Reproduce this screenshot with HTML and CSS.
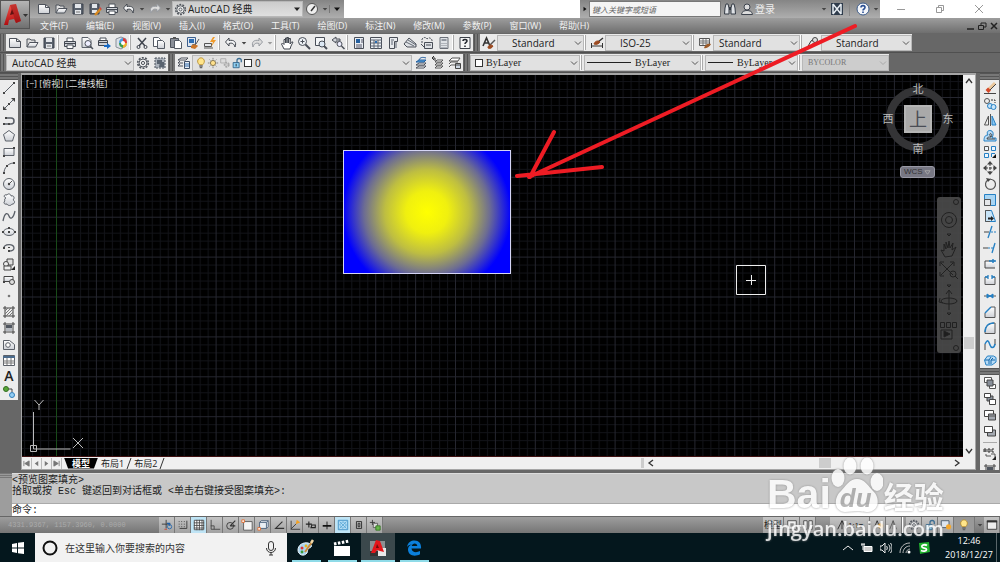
FILE: index.html
```html
<!DOCTYPE html>
<html lang="zh-CN">
<head>
<meta charset="utf-8">
<title>AutoCAD 经典</title>
<link rel="stylesheet" href="styles.css">
</head>
<body>
<svg class="defs" aria-hidden="true">
<defs>
<linearGradient id="paper" x2="0" y2="1"><stop offset="0" stop-color="#fff"/><stop offset="1" stop-color="#cdd0d6"/></linearGradient>
<linearGradient id="red" x2="0" y2="1"><stop offset="0" stop-color="#f4574c"/><stop offset="1" stop-color="#b00d10"/></linearGradient>
</defs>
<symbol id="new" viewBox="0 0 14 14"><path d="M1.500 2.500h7l4 3v6h-11z" fill="url(#paper)" stroke="#4d525b"/><path d="M8.500 2.500v3h4" fill="none" stroke="#4d525b"/></symbol>
<symbol id="open" viewBox="0 0 14 14"><path d="M2 11V3h3l1 1h4v3" fill="#ddd" stroke="#4d525b"/><path d="M2 11l2.500-4.500H13L10.500 11z" fill="url(#paper)" stroke="#4d525b"/></symbol>
<symbol id="save" viewBox="0 0 14 14"><path d="M2 2h10v10H2z" fill="#59616c" stroke="#3d434d"/><path d="M4 2h6v4H4zM4 8h6v4H4z" fill="#e3e6ea"/><path d="M5 10h4" stroke="#777"/></symbol>
<symbol id="saveas" viewBox="0 0 14 14"><path d="M2 2h9v10H2z" fill="#59616c" stroke="#3d434d"/><path d="M4 2h5v4H4zM4 8h5v3H4z" fill="#e3e6ea"/><path d="M7 13l5.500-6" stroke="#d98a20" stroke-width="2.500"/><path d="M12 7l1-1" stroke="#c44" stroke-width="2.500"/></symbol>
<symbol id="print" viewBox="0 0 14 14"><path d="M4 5V2h6v3" fill="#fff" stroke="#4d525b"/><path d="M1.500 5.500h11v5h-11z" fill="#cfd2d7" stroke="#434851"/><path d="M1 7.500h12" stroke="#434851"/><path d="M4 9h6v3.500H4z" fill="#fff" stroke="#4d525b"/></symbol>
<symbol id="preview" viewBox="0 0 14 14"><path d="M2 1.500h6l3 3v7H2z" fill="url(#paper)" stroke="#5d626b"/><circle cx="8" cy="7.500" r="3" fill="#eef" stroke="#4d525b"/><path d="M10 10l3 3" stroke="#4d525b" stroke-width="1.500"/></symbol>
<symbol id="publish" viewBox="0 0 14 14"><path d="M3 4V2h6v2" fill="#fff" stroke="#4d525b"/><path d="M1.500 4.500h9v5h-9z" fill="#cfd2d7" stroke="#434851"/><path d="M1 6.500h10" stroke="#434851"/><path d="M7 9h3V7l4 3-4 3v-2H7z" fill="#1769c4"/></symbol>
<symbol id="dwf" viewBox="0 0 14 14"><path d="M2 3l5-2 5 2v7l-5 3-5-2z" fill="#dce2e8" stroke="#8a9099"/><path d="M9 2a5 5 0 0 1 4 5H9z" fill="#e03a3a"/><path d="M13 7a5 5 0 0 1-4 5V7z" fill="#f1b22c"/><path d="M9 12a5 5 0 0 1-4-5h4z" fill="#3b9b4d"/><path d="M5 7a5 5 0 0 1 4-5v5z" fill="#4d9de0"/><circle cx="9" cy="7" r="2" fill="#fff"/></symbol>
<symbol id="cut" viewBox="0 0 14 14"><path d="M3 2l7 8M11 2L4 10" stroke="#3f444d" stroke-width="1.500"/><circle cx="3.500" cy="11" r="1.500" fill="none" stroke="#3f444d"/><circle cx="10.500" cy="11" r="1.500" fill="none" stroke="#3f444d"/></symbol>
<symbol id="copy" viewBox="0 0 14 14"><path d="M1.500 1.500h5l2 2v7h-7z" fill="#fff" stroke="#555b65"/><path d="M5.500 4.500h5l2 2v6h-7z" fill="url(#paper)" stroke="#555b65"/></symbol>
<symbol id="paste" viewBox="0 0 14 14"><path d="M1.500 2.500h8v9h-8z" fill="#8a8f98" stroke="#4d525b"/><path d="M4 1h3v2H4z" fill="#555"/><path d="M5.500 4.500h5l2 2v6h-7z" fill="#fff" stroke="#555b65"/></symbol>
<symbol id="match" viewBox="0 0 14 14"><path d="M1.500 1.500h8v9h-8z" fill="#dfe6ef" stroke="#3d5f8c"/><path d="M3 3h5v4H3z" fill="#2c6db4"/><path d="M6 9l4-1 3-5" stroke="#555" fill="none"/><path d="M5 10c2-2 5-2 7 0l-3 3-4-1z" fill="#c9752a"/></symbol>
<symbol id="blockedit" viewBox="0 0 14 14"><path d="M1.500 7.500h7v3h-7z" fill="#e6e8eb" stroke="#555"/><path d="M1 12h9" stroke="#555"/><path d="M10 1L7 6h3l-2 5 5-7h-3l2-3z" fill="#f09a28"/></symbol>
<symbol id="undo" viewBox="0 0 14 14"><path d="M5 2L1.500 6 5 10V7.500c3-1 5 0 6 3.500 2-5-1-7.500-6-6.500z" fill="#f4f5f6" stroke="#42474f"/></symbol>
<symbol id="redo" viewBox="0 0 14 14"><path d="M9 2l3.500 4L9 10V7.500c-3-1-5 0-6 3.500-2-5 1-7.500 6-6.500z" fill="#ddd" stroke="#989ca2"/></symbol>
<symbol id="pan" viewBox="0 0 14 14"><path d="M4 13L1.500 8l1-1L4 8.500V3.500h1.500V7 2H7v5V1.500h1.500V7l.5-4.500h1.500L10 8l1.500-2H13l-2 4-1 3z" fill="#fff" stroke="#41464f"/></symbol>
<symbol id="zoom" viewBox="0 0 14 14"><circle cx="5.500" cy="5.500" r="4" fill="#eef2f6" stroke="#4a4f58"/><path d="M3.500 5.500h4M5.500 3.500v4" stroke="#4a4f58"/><path d="M8.500 8.500L13 13" stroke="#4a4f58" stroke-width="2"/></symbol>
<symbol id="zoomwin" viewBox="0 0 14 14"><path d="M1.500 1.500h9v8h-9z" fill="#f4f6f8" stroke="#4a4f58"/><circle cx="8" cy="8" r="3" fill="#dde9f5" stroke="#4a4f58"/><path d="M10 10l3 3" stroke="#4a4f58" stroke-width="2"/></symbol>
<symbol id="zoomprev" viewBox="0 0 14 14"><path d="M5 1L1 4l4 3V5h4V3H5z" fill="#d4d7dc" stroke="#4a4f58"/><circle cx="8.500" cy="8" r="2.500" fill="#eef" stroke="#4a4f58"/><path d="M10.500 10l3 3" stroke="#4a4f58" stroke-width="1.500"/></symbol>
<symbol id="props" viewBox="0 0 14 14"><path d="M2.500 1.500h9v11h-9z" fill="#e9edf2" stroke="#4a4f58"/><path d="M4 3h4v4H4z" fill="#245f9e"/><path d="M4 9h6M4 11h6M9 4h2M9 6h2" stroke="#556"/></symbol>
<symbol id="design" viewBox="0 0 14 14"><path d="M1.500 1.500h11v11h-11z" fill="#edf0f3" stroke="#4a4f58"/><path d="M1 4h12M5 4v9M9 4v9M1 7h12M1 10h12" stroke="#5b6370"/><path d="M6 5h2v2H6z" fill="#2b6cb0"/></symbol>
<symbol id="palette" viewBox="0 0 14 14"><path d="M3.500 1.500h8v4h-3v7h-5z" fill="#e9ebee" stroke="#4a4f58"/><path d="M5 4h3M5 6h2M5 8h2M10 6v6" stroke="#5b6370"/></symbol>
<symbol id="sheet" viewBox="0 0 14 14"><path d="M1 8l5-6 7 6v3H4z" fill="#dfe2e6" stroke="#4a4f58"/><path d="M3 6l8 4M5 4l8 5" stroke="#646a74"/></symbol>
<symbol id="markup" viewBox="0 0 14 14"><path d="M2 7V3c2-2 4-2 5 0 2-2 4-1 5 1v3" fill="none" stroke="#4a4f58" stroke-dasharray="2 1"/><path d="M4.500 6.500h8v6h-8z" fill="#dfe2e6" stroke="#4a4f58"/><path d="M6 9h5" stroke="#4a4f58"/><path d="M1 8l3 3" stroke="#4a4f58"/></symbol>
<symbol id="calc" viewBox="0 0 14 14"><path d="M3 1.500h8v11H3z" fill="#dfe2e6" stroke="#6b7079"/><path d="M4.500 3h5v2h-5z" fill="#8f959e"/><path d="M5 7v5M7 7v5M9 7v5" stroke="#81868f" stroke-dasharray="1 1"/></symbol>
<symbol id="helpbox" viewBox="0 0 14 14"><path d="M2 1.500h10v11H2z" fill="#f5f5f5" stroke="#3c4149"/><path d="M5 5c0-2 4-2 4 0 0 1.500-2 1.300-2 3M7 9.500v1.500" fill="none" stroke="#22262d" stroke-width="1.500"/></symbol>
<symbol id="textstyle" viewBox="0 0 14 14"><path d="M1 10L4.500 2 8 10M2 7h5" fill="none" stroke="#333" stroke-width="1.600"/><path d="M8 9l5-5" stroke="#555" stroke-width="1.500"/><path d="M6 12c0-3 3-4 5-2-1 2-3 3-5 2z" fill="#9c4a20" stroke="#9c4a20"/></symbol>
<symbol id="dimstyle" viewBox="0 0 14 14"><path d="M1.500 7v5M12.500 7v5M1 10h12" stroke="#333"/><path d="M8 6l5-4" stroke="#333" stroke-width="1.500"/><path d="M4 8c1-3 4-4 6-2-1 2-4 3-6 2z" fill="#9c4a20" stroke="#9c4a20"/></symbol>
<symbol id="tablestyle" viewBox="0 0 14 14"><path d="M1.500 2.500h10v7h-10z" fill="#f4f4f4" stroke="#555"/><path d="M1 5h11M5 3v6M8 3v6M1 7h10" stroke="#777"/><path d="M6 12c1-3 3-5 7-4-1 2-4 5-7 4z" fill="#9c5a28"/></symbol>
<symbol id="mleader" viewBox="0 0 14 14"><path d="M1 12l4-7 3-2" stroke="#333" fill="none"/><circle cx="9" cy="4" r="2.500" fill="#ddd" stroke="#444"/><path d="M4 10c2-3 4-4 7-3-1 3-4 4-7 3z" fill="#79523a"/></symbol>
<symbol id="gear" viewBox="0 0 14 14"><circle cx="7" cy="7" r="5.300" fill="none" stroke="#50555d" stroke-width="1.600" stroke-dasharray="2 1.300"/><circle cx="7" cy="7" r="4" fill="#eee" stroke="#50555d"/><circle cx="7" cy="7" r="1.600" fill="none" stroke="#50555d"/></symbol>
<symbol id="wsave" viewBox="0 0 14 14"><path d="M2 2h10v10H2z" fill="#aab1ba" stroke="#4b525d" stroke-dasharray="2 1"/><path d="M4 4h5v4H4zM7 6h4v5H6z" fill="#59636f"/></symbol>
<symbol id="layers" viewBox="0 0 14 14"><path d="M1 4l3-2h7L9 4zM1 7l2-2M1 7h5M1 10l2-2M1 10h5" fill="#fff" stroke="#4a4f58"/><path d="M7.500 5.500h5v7h-5z" fill="#e8eef5" stroke="#3a4b63"/><path d="M8 8h4M8 10h4" stroke="#2c69ac"/></symbol>
<symbol id="layercur" viewBox="0 0 14 14"><path d="M2 12l3-2h7l-2 2zM2 9l3-2h7l-2 2z" fill="#fff" stroke="#4a4f58"/><path d="M2 6l3-2h7l-2 2z" fill="#56a5e0" stroke="#245f9e"/><path d="M5 4c1-3 4-3 7-2" fill="none" stroke="#245f9e"/></symbol>
<symbol id="layerprev" viewBox="0 0 14 14"><path d="M4 12l2-2h6l-2 2zM4 9l2-2h6l-2 2zM4 6l2-2h6l-2 2z" fill="#fff" stroke="#555"/><path d="M4 5V2H1M3 0L1 2l2 2" fill="none" stroke="#333"/></symbol>
<symbol id="layerstate" viewBox="0 0 14 14"><path d="M1 11l2-2h6M1 8l2-2h7M1 5l3-3h8l-2 3z" fill="#fff" stroke="#555"/><path d="M7.500 7.500h5v5h-5z" fill="#ccd6e2" stroke="#444"/><path d="M8 9h4" stroke="#444"/></symbol>
<symbol id="bulb" viewBox="0 0 14 14"><path d="M5 9C1 5 4 1 7 1s6 4 2 8z" fill="#ffe58a" stroke="#b58a2a"/><path d="M5 10.500h4M5.500 12.500h3" stroke="#666" stroke-width="1.500"/></symbol>
<symbol id="sun" viewBox="0 0 14 14"><circle cx="7" cy="7" r="3" fill="#ffe18c" stroke="#7b6b42"/><path d="M7 1v2M7 11v2M1 7h2M11 7h2M3 3l1 1M10 10l1 1M11 3l-1 1M4 10l-1 1" stroke="#777"/></symbol>
<symbol id="vpfreeze" viewBox="0 0 14 14"><path d="M2 2h6v5H2z" fill="#ddd" stroke="#aaa"/><circle cx="9" cy="9" r="2.500" fill="#ccc" stroke="#aaa" stroke-dasharray="2 1" stroke-width="2"/></symbol>
<symbol id="lock" viewBox="0 0 14 14"><path d="M7 7V4c0-3 5-3 5 0v2" fill="none" stroke="#3c6e93" stroke-width="1.500"/><path d="M2.500 6.500h7v6h-7z" fill="#8fd0f4" stroke="#2d5f85"/><path d="M6 8v3" stroke="#222"/></symbol>
<symbol id="line" viewBox="0 0 14 14"><path d="M2 12L12 2" stroke="#5b6068"/><path d="M1 11h2v2H1zM11 1h2v2h-2z" fill="#444"/></symbol>
<symbol id="xline" viewBox="0 0 14 14"><path d="M2 12L12 2" stroke="#5b6068"/><path d="M1 13V9l4 4zM13 1v4L9 1zM6 6h2v2H6z" fill="#444"/></symbol>
<symbol id="pline" viewBox="0 0 14 14"><path d="M2 11h7c4 0 4-6 0-6H4" fill="none" stroke="#5b6068" stroke-width="1.500"/><path d="M1 10h2v2H1zM6 10h2v2H6zM3 4h2v2H3z" fill="#444"/></symbol>
<symbol id="polygon" viewBox="0 0 14 14"><path d="M7 1.500l5.500 4-2 6.500h-7l-2-6.500z" fill="url(#paper)" stroke="#5b6068"/></symbol>
<symbol id="rect" viewBox="0 0 14 14"><path d="M2 3.500h10v7H2z" fill="url(#paper)" stroke="#5b6068"/><path d="M1 10h2v2H1zM11 2h2v2h-2z" fill="#444"/></symbol>
<symbol id="arc" viewBox="0 0 14 14"><path d="M2 12C2 7 6 2 12 2" fill="none" stroke="#5b6068"/><path d="M1 11h2v2H1zM4 4h2v2H4zM11 1h2v2h-2z" fill="#444"/></symbol>
<symbol id="circle" viewBox="0 0 14 14"><circle cx="7" cy="7" r="5.500" fill="url(#paper)" stroke="#5b6068"/><path d="M7 7l3-3" stroke="#555"/><circle cx="7" cy="7" r="1.200" fill="#444"/></symbol>
<symbol id="cloud" viewBox="0 0 14 14"><path d="M4 5C1 4 2 1 5 2c1-2 4-1 4 1 3-1 4 2 2 4 3 1 1 5-1 4-1 2-4 2-5 0-3 1-4-2-2-3-1-1 0-3 1-3z" fill="url(#paper)" stroke="#5b6068"/></symbol>
<symbol id="spline" viewBox="0 0 14 14"><path d="M1 12C3 2 6 4 7 7s4 4 6-5" fill="none" stroke="#5b6068" stroke-width="1.300"/></symbol>
<symbol id="ellipse" viewBox="0 0 14 14"><ellipse cx="7" cy="7" rx="5.500" ry="3.500" fill="url(#paper)" stroke="#5b6068"/><path d="M0 6h2v2H0zM12 6h2v2h-2zM6 2h2v2H6zM6 6h2v2H6z" fill="#444"/></symbol>
<symbol id="earc" viewBox="0 0 14 14"><path d="M2 7c0-4 10-5 10 0 0 3-3 3-5 3" fill="none" stroke="#5b6068" stroke-width="1.300"/><path d="M1 6h2v2H1zM6 9h2v2H6zM6 6h2v1H6z" fill="#444"/></symbol>
<symbol id="insert" viewBox="0 0 14 14"><path d="M5 2h6v6H5z" fill="#ddd" stroke="#444"/><circle cx="4" cy="7" r="2.500" fill="#eee" stroke="#444"/><path d="M2 9h7v4H2z" fill="#eee" stroke="#444"/><path d="M13 9v4H9z" fill="#222"/></symbol>
<symbol id="block" viewBox="0 0 14 14"><path d="M2 3.500h9v5H2z" fill="url(#paper)" stroke="#444"/><circle cx="10" cy="9" r="2.500" fill="#ddd" stroke="#444"/><path d="M1 8h2v2H1z" fill="#444"/></symbol>
<symbol id="point" viewBox="0 0 14 14"><circle cx="7" cy="7" r="1.300" fill="#777"/></symbol>
<symbol id="hatch" viewBox="0 0 14 14"><path d="M3 1v12M11 1v12M1 3h12M1 11h12" stroke="#444"/><path d="M3 6l3-3M3 9l6-6M4 11l7-7M7 11l4-4" stroke="#777"/></symbol>
<symbol id="gradient" viewBox="0 0 14 14"><path d="M3 1v12M11 1v12M1 3h12M1 11h12" stroke="#444"/><path d="M4 4h6v3H4z" fill="#50565f"/><path d="M4 7h6v3H4z" fill="#b6bac0"/></symbol>
<symbol id="region" viewBox="0 0 14 14"><path d="M1.500 3.500h6l5 4v5h-11z" fill="url(#paper)" stroke="#5b6068"/><circle cx="6" cy="8" r="2.300" fill="#fff" stroke="#5b6068"/></symbol>
<symbol id="table" viewBox="0 0 14 14"><path d="M1.500 2.500h11v10h-11z" fill="#fff" stroke="#5b6068"/><path d="M1 3h12v2H1z" fill="#4b6b8c"/><path d="M1 8h12M1 10h12M5 5v7M9 5v7" stroke="#777"/></symbol>
<symbol id="addsel" viewBox="0 0 14 14"><circle cx="4" cy="4" r="2.500" fill="#59a63a" stroke="#356d21"/><circle cx="10" cy="10" r="2.500" fill="#92cdf4" stroke="#317eb8"/><path d="M7 4h3v3" fill="none" stroke="#444"/></symbol>
<symbol id="erase" viewBox="0 0 14 14"><path d="M1 12.500h12" stroke="#444"/><path d="M5 9l7-7" stroke="#eac79c" stroke-width="3"/><path d="M7 9l6-6" stroke="#444"/><path d="M4 10.500l2.500-2.500" stroke="#d5492a" stroke-width="4"/></symbol>
<symbol id="copyobj" viewBox="0 0 14 14"><circle cx="4" cy="4" r="2.500" fill="#eee" stroke="#555"/><circle cx="7" cy="9" r="2.500" fill="#c9e5fa" stroke="#2580c4"/><circle cx="10.500" cy="10" r="2.500" fill="#c9e5fa" stroke="#2580c4"/><path d="M8 3h4v3" fill="none" stroke="#333" stroke-dasharray="2 1"/></symbol>
<symbol id="mirror" viewBox="0 0 14 14"><path d="M5.500 3v9h-4z" fill="#eee" stroke="#555"/><path d="M9 3v9h4z" fill="#8bc6f0" stroke="#2580c4"/><path d="M7.500 1v12" stroke="#555"/></symbol>
<symbol id="offset" viewBox="0 0 14 14"><path d="M1 12h12v-3H9c5-10-8-9-4-3-3 0-4 2-4 6z" fill="#b9dcf6" stroke="#2580c4"/><path d="M4 10h8M4 10c0-2 2-2 4-2-4-5 3-4 0 0" stroke="#444" fill="none"/></symbol>
<symbol id="array" viewBox="0 0 14 14"><g fill="#eef6fd" stroke="#2580c4"><path d="M1.500 1.500h4v4h-4z" stroke="#555"/><path d="M8.500 1.500h4v4h-4zM1.500 8.500h4v4h-4zM8.500 12V8.500H12"/></g><path d="M13 9v4H9z" fill="#111"/></symbol>
<symbol id="move" viewBox="0 0 14 14"><path d="M7 2v10M2 7h10" stroke="#444" stroke-dasharray="3 1"/><path d="M7 0l3 3.500H4zM7 14l3-3.500H4zM0 7l3.500-3v6zM14 7l-3.500-3v6z" fill="#444"/></symbol>
<symbol id="rotate" viewBox="0 0 14 14"><path d="M5 3a5 5 0 1 0 5 0" fill="none" stroke="#555" stroke-width="1.200"/><path d="M3 1l5 1-3 3z" fill="#444"/><path d="M7 2l3 1" stroke="#555"/></symbol>
<symbol id="scale" viewBox="0 0 14 14"><path d="M1.500 1.500h11v11h-11z" fill="#a8d5f4" stroke="#2580c4"/><path d="M1.500 6.500h6v6h-6z" fill="#e5e7ea" stroke="#555"/></symbol>
<symbol id="stretch" viewBox="0 0 14 14"><path d="M2.500 1.500h6l4 11h-10z" fill="#c8e4f8" stroke="#2580c4"/><path d="M7 1.500H2.500v11H7" fill="none" stroke="#555"/><path d="M5 8.500h3V7l3 2.500L8 12v-1.500H5z" fill="#222"/></symbol>
<symbol id="trim" viewBox="0 0 14 14"><path d="M5 13L9 1" stroke="#2580c4" stroke-width="1.300"/><path d="M1 7h5" stroke="#444"/><path d="M8 7h6" stroke="#2580c4" stroke-dasharray="2 1"/></symbol>
<symbol id="extend" viewBox="0 0 14 14"><path d="M9 12l3-10" stroke="#2580c4" stroke-width="1.300"/><path d="M0 7h5" stroke="#444"/><path d="M5 7h5" stroke="#2580c4" stroke-dasharray="2 1"/></symbol>
<symbol id="breakpt" viewBox="0 0 14 14"><path d="M12 4H2v7h10" fill="url(#paper)" stroke="#444"/><path d="M6 4h7M10 2v4" stroke="#2580c4" stroke-width="1.500"/></symbol>
<symbol id="break" viewBox="0 0 14 14"><path d="M5 4H2v7.500h10V4H9" fill="url(#paper)" stroke="#555"/><path d="M2 4h3M9 4h3M5 2v4M9 2v4" stroke="#2580c4" stroke-width="1.300"/></symbol>
<symbol id="join" viewBox="0 0 14 14"><path d="M1 7h12" stroke="#555"/><path d="M7 7L4 5v4zM7 7l3-2v4z" fill="#2580c4" stroke="#2580c4"/></symbol>
<symbol id="chamfer" viewBox="0 0 14 14"><path d="M2 12.500V8l6-6h4v10.500z" fill="url(#paper)" stroke="#555"/><path d="M2 8l6-6" stroke="#2580c4" stroke-width="1.500"/></symbol>
<symbol id="fillet" viewBox="0 0 14 14"><path d="M2 12.500V11c0-5 3-9 10-9v10.500z" fill="url(#paper)" stroke="#555"/><path d="M2 11c0-5 3-9 9-9" fill="none" stroke="#2580c4" stroke-width="1.500"/></symbol>
<symbol id="blend" viewBox="0 0 14 14"><path d="M2 13V7M12 8V2" stroke="#444"/><path d="M2 7c3-6 4-2 5 1s4 4 5-1" fill="none" stroke="#2580c4" stroke-width="1.500"/></symbol>
<symbol id="explode" viewBox="0 0 14 14"><path d="M1.500 7l3-4h6l2.500 1.500V9L9 12H3z" fill="#b9dcf6" stroke="#2580c4"/><path d="M2 7h4v4M6 7l2-3M8 11V7h4M8 7l2-2" fill="none" stroke="#1567a8"/></symbol>
<symbol id="ord1" viewBox="0 0 14 14"><path d="M1.500 1.500h7v5h-7zM6.500 8.500h6v4h-6z" fill="#fff" stroke="#555"/><path d="M4 4h6v6H4z" fill="#888f99" stroke="#444"/></symbol>
<symbol id="ord2" viewBox="0 0 14 14"><path d="M4 4h6v5H4z" fill="#888f99" stroke="#444"/><path d="M1.500 1.500h6v4h-6zM6.500 7.500h6v5h-6z" fill="#fff" stroke="#444"/></symbol>
<symbol id="ord3" viewBox="0 0 14 14"><path d="M1.500 2.500h9v6h-9z" fill="#fff" stroke="#444"/><path d="M5.500 6h7v6h-7z" fill="#a4a9b1" stroke="#444"/><path d="M6 8h6" stroke="#555"/></symbol>
<symbol id="ord4" viewBox="0 0 14 14"><path d="M4.500 6h8v6h-8z" fill="#a4a9b1" stroke="#444"/><path d="M1.500 2.500h8v6h-8z" fill="#fff" stroke="#444"/></symbol>
<symbol id="abc" viewBox="0 0 14 14"><path d="M1 5V2h2v3M1 4h2M5 5V2h2v3zM11 2H9v3h2" fill="none" stroke="#333"/><path d="M3 7v2h5M8 7h4v4" fill="none" stroke="#555"/><path d="M13 9v4H9z" fill="#222"/></symbol>
<symbol id="chev" viewBox="0 0 8 8"><path d="M1 2.500l3 3 3-3" fill="none" stroke="#555"/></symbol>
<symbol id="tri" viewBox="0 0 8 8"><path d="M1 2.500h6L4 6z" fill="currentColor"/></symbol>
</svg>

<header class="head">
  <button class="logo" aria-label="应用程序菜单"><svg viewBox="0 0 28 28"><path d="M3 24L9 4l6-1 5 17-5 2-2-4-5 1-1 5z" fill="url(#red)"/><path d="M9 14l2-6 2 5z" fill="#5d1313"/><path d="M15 3l5 17-5 2-6-18z" fill="#8e0d10" opacity=".45"/><path d="M22 13h5l-2.500 3z" fill="#333"/></svg></button>
  <div class="title">
    <div class="quick">
      <button class="q" aria-label="新建"><svg><use href="#new"/></svg></button>
      <button class="q" aria-label="打开"><svg><use href="#open"/></svg></button>
      <button class="q" aria-label="保存"><svg><use href="#save"/></svg></button>
      <button class="q" aria-label="另存为"><svg><use href="#saveas"/></svg></button>
      <button class="q" aria-label="打印"><svg><use href="#print"/></svg></button>
      <button class="q" aria-label="放弃"><svg><use href="#undo"/></svg></button>
      <button class="drop" aria-label="放弃列表"><svg><use href="#tri"/></svg></button>
      <button class="q" aria-label="重做"><svg><use href="#redo"/></svg></button>
      <button class="drop" aria-label="重做列表"><svg><use href="#tri"/></svg></button>
      <label class="combo wide"><svg class="ic"><use href="#gear"/></svg><select aria-label="工作空间"><option>AutoCAD 经典</option></select><svg class="ch"><use href="#tri"/></svg></label>
      <button class="q" aria-label="性能"><svg viewBox="0 0 14 14"><circle cx="7" cy="7" r="5.500" fill="#eee" stroke="#555"/><path d="M6 9l4-5" stroke="#333" stroke-width="1.500"/></svg></button>
      <button class="drop" aria-label="更多"><svg><use href="#tri"/></svg></button>
      <button class="drop end" aria-label="自定义"><svg><use href="#tri"/></svg></button>
    </div>
    <div class="info">
      <button class="drop" aria-label="收起"><svg viewBox="0 0 8 8"><path d="M2 1l4 3-4 3z" fill="#111"/></svg></button>
      <input class="find" type="text" aria-label="搜索" placeholder="键入关键字或短语">
      <button class="q" aria-label="查找"><svg viewBox="0 0 14 14"><path d="M2 6l1-4h2l1 4v6H1.500zM12 6l-1-4H9L8 6v6h4.500z" fill="#dfe2e6" stroke="#333a44"/><path d="M6 5h2v3H6z" fill="#333a44"/></svg></button>
      <button class="q" aria-label="用户"><svg viewBox="0 0 14 14"><circle cx="7" cy="5" r="3" fill="#ddd" stroke="#3d434d"/><path d="M1.500 12.500c0-3 3-4 5.500-4s5.500 1 5.500 4z" fill="#ddd" stroke="#3d434d"/></svg></button>
      <button class="login">登录</button>
      <button class="drop" aria-label="登录列表"><svg><use href="#tri"/></svg></button>
      <button class="q" aria-label="Exchange"><svg viewBox="0 0 14 14"><path d="M1 1h12v12H1z" fill="#2f3c4c"/><path d="M3 2l8 10M3 12l8-10M3 2v10M11 2v10" stroke="#e8eef4" stroke-width="1.500"/></svg></button>
      <span class="vs"></span>
      <button class="q" aria-label="帮助"><svg viewBox="0 0 14 14"><circle cx="7" cy="7" r="6" fill="#f4f6fa" stroke="#3c5c8c"/><path d="M5 5.500c0-2.500 4-2.500 4 0 0 1.500-2 1.500-2 3M7 9.500V11" fill="none" stroke="#2a4f94" stroke-width="1.600"/></svg></button>
      <button class="drop" aria-label="帮助列表"><svg><use href="#tri"/></svg></button>
    </div>
    <div class="win">
      <button aria-label="最小化"><svg viewBox="0 0 10 10"><path d="M1 5.500h8" stroke="#999"/></svg></button>
      <button aria-label="还原"><svg viewBox="0 0 10 10"><path d="M1.500 3.500h5v5h-5zM3.500 3V1.500h5v5H7" fill="none" stroke="#999"/></svg></button>
      <button aria-label="关闭"><svg viewBox="0 0 10 10"><path d="M1 1l8 8M9 1L1 9" stroke="#999"/></svg></button>
    </div>
  </div>
  <nav class="menu">
    <a href="#">文件(F)</a><a href="#">编辑(E)</a><a href="#">视图(V)</a><a href="#">插入(I)</a><a href="#">格式(O)</a><a href="#">工具(T)</a><a href="#">绘图(D)</a><a href="#">标注(N)</a><a href="#">修改(M)</a><a href="#">参数(P)</a><a href="#">窗口(W)</a><a href="#">帮助(H)</a>
    <span class="docwin"><button aria-label="最小化文档"><svg viewBox="0 0 10 10"><path d="M2 8h7" stroke="#222" stroke-width="1.500"/></svg></button><button aria-label="还原文档"><svg viewBox="0 0 10 10"><path d="M1.500 4.500h5v4h-5zM4 4V2h5v4H7" fill="none" stroke="#222"/></svg></button><button aria-label="关闭文档"><svg viewBox="0 0 10 10"><path d="M2 2l6 6M8 2L2 8" stroke="#222" stroke-width="1.500"/></svg></button></span>
  </nav>
</header>

<div class="row">
  <div class="bar"><i class="grip"></i>
    <button class="b" aria-label="新建"><svg><use href="#new"/></svg></button><button class="b" aria-label="打开"><svg><use href="#open"/></svg></button><button class="b" aria-label="保存"><svg><use href="#save"/></svg></button><span class="s"></span><button class="b" aria-label="打印"><svg><use href="#print"/></svg></button><button class="b" aria-label="打印预览"><svg><use href="#preview"/></svg></button><button class="b" aria-label="发布"><svg><use href="#publish"/></svg></button><button class="b" aria-label="三维"><svg><use href="#dwf"/></svg></button><span class="s"></span><button class="b" aria-label="剪切"><svg><use href="#cut"/></svg></button><button class="b" aria-label="复制"><svg><use href="#copy"/></svg></button><button class="b" aria-label="粘贴"><svg><use href="#paste"/></svg></button><button class="b" aria-label="特性匹配"><svg><use href="#match"/></svg></button><button class="b" aria-label="块编辑器"><svg><use href="#blockedit"/></svg></button><span class="s"></span><button class="b" aria-label="放弃"><svg><use href="#undo"/></svg></button><button class="drop" aria-label="放弃列表"><svg><use href="#tri"/></svg></button><button class="b" aria-label="重做"><svg><use href="#redo"/></svg></button><button class="drop off" aria-label="重做列表"><svg><use href="#tri"/></svg></button><span class="s"></span><button class="b" aria-label="平移"><svg><use href="#pan"/></svg></button><button class="b" aria-label="实时缩放"><svg><use href="#zoom"/></svg></button><button class="b" aria-label="窗口缩放"><svg><use href="#zoomwin"/></svg></button><button class="b" aria-label="缩放上一个"><svg><use href="#zoomprev"/></svg></button><span class="s"></span><button class="b" aria-label="特性"><svg><use href="#props"/></svg></button><button class="b" aria-label="设计中心"><svg><use href="#design"/></svg></button><button class="b" aria-label="工具选项板"><svg><use href="#palette"/></svg></button><button class="b" aria-label="图纸集"><svg><use href="#sheet"/></svg></button><button class="b" aria-label="标记集"><svg><use href="#markup"/></svg></button><button class="b" aria-label="计算器"><svg><use href="#calc"/></svg></button><span class="s"></span><button class="b" aria-label="帮助"><svg><use href="#helpbox"/></svg></button>
  </div>
  <div class="bar"><i class="grip"></i>
    <button class="b" aria-label="文字样式"><svg><use href="#textstyle"/></svg></button><label class="combo st"><select class="mid" aria-label="文字样式"><option>Standard</option></select><svg class="ch"><use href="#chev"/></svg></label><span class="s"></span>
    <button class="b" aria-label="标注样式"><svg><use href="#dimstyle"/></svg></button><label class="combo st"><select class="mid" aria-label="标注样式"><option>ISO-25</option></select><svg class="ch"><use href="#chev"/></svg></label><span class="s"></span>
    <button class="b" aria-label="表格样式"><svg><use href="#tablestyle"/></svg></button><label class="combo st"><select aria-label="表格样式"><option>Standard</option></select><svg class="ch"><use href="#chev"/></svg></label><span class="s"></span>
    <button class="b" aria-label="多重引线样式"><svg><use href="#mleader"/></svg></button><label class="combo st last"><select class="mid" aria-label="多重引线样式"><option>Standard</option></select><svg class="ch"><use href="#chev"/></svg></label>
  </div>
</div>
<div class="row">
  <div class="bar"><i class="grip"></i><label class="combo ws"><select aria-label="工作空间"><option>AutoCAD 经典</option></select><svg class="ch"><use href="#chev"/></svg></label><button class="b" aria-label="设置"><svg><use href="#gear"/></svg></button><button class="b" aria-label="我的工作空间"><svg><use href="#wsave"/></svg></button></div>
  <div class="bar"><i class="grip"></i><button class="b" aria-label="图层特性"><svg><use href="#layers"/></svg></button><label class="combo layer"><svg class="sm"><use href="#bulb"/></svg><svg class="sm"><use href="#sun"/></svg><svg class="sm"><use href="#vpfreeze"/></svg><svg class="sm"><use href="#lock"/></svg><i class="sw"></i><select aria-label="图层"><option>0</option></select><svg class="ch"><use href="#chev"/></svg></label><button class="b" aria-label="置为当前"><svg><use href="#layercur"/></svg></button><button class="b" aria-label="上一个图层"><svg><use href="#layerprev"/></svg></button><button class="b" aria-label="图层状态"><svg><use href="#layerstate"/></svg></button></div>
  <div class="bar serif"><i class="grip"></i><label class="combo c1"><i class="sw"></i><select aria-label="颜色"><option>ByLayer</option></select><svg class="ch"><use href="#chev"/></svg></label><span class="s"></span><label class="combo c2"><i class="ln"></i><select aria-label="线型"><option>ByLayer</option></select><svg class="ch"><use href="#chev"/></svg></label><span class="s"></span><label class="combo c3"><i class="ln short"></i><select aria-label="线宽"><option>ByLayer</option></select><svg class="ch"><use href="#chev"/></svg></label><span class="s"></span><label class="combo c4"><select disabled aria-label="打印样式"><option>BYCOLOR</option></select><svg class="ch"><use href="#chev"/></svg></label></div>
</div>

<main class="work">
  <div class="side">
    <i class="hgrip"></i>
    <button class="b" aria-label="直线"><svg><use href="#line"/></svg></button><button class="b" aria-label="构造线"><svg><use href="#xline"/></svg></button><button class="b" aria-label="多段线"><svg><use href="#pline"/></svg></button><button class="b" aria-label="多边形"><svg><use href="#polygon"/></svg></button><button class="b" aria-label="矩形"><svg><use href="#rect"/></svg></button><button class="b" aria-label="圆弧"><svg><use href="#arc"/></svg></button><button class="b" aria-label="圆"><svg><use href="#circle"/></svg></button><button class="b" aria-label="修订云线"><svg><use href="#cloud"/></svg></button><button class="b" aria-label="样条曲线"><svg><use href="#spline"/></svg></button><button class="b" aria-label="椭圆"><svg><use href="#ellipse"/></svg></button><button class="b" aria-label="椭圆弧"><svg><use href="#earc"/></svg></button><button class="b" aria-label="插入块"><svg><use href="#insert"/></svg></button><button class="b" aria-label="创建块"><svg><use href="#block"/></svg></button><button class="b" aria-label="点"><svg><use href="#point"/></svg></button><button class="b" aria-label="图案填充"><svg><use href="#hatch"/></svg></button><button class="b" aria-label="渐变色"><svg><use href="#gradient"/></svg></button><button class="b" aria-label="面域"><svg><use href="#region"/></svg></button><button class="b" aria-label="表格"><svg><use href="#table"/></svg></button><button class="b big" aria-label="多行文字">A</button><button class="b" aria-label="添加选定对象"><svg><use href="#addsel"/></svg></button>
  </div>
  <section class="doc">
    <div class="view">
      <svg class="drawing">
        <defs>
          <pattern id="major" x="34" y="22" width="39.900" height="39.900" patternUnits="userSpaceOnUse"><path d="M8.500 0v40M16.500 0v40M24.500 0v40M32.500 0v40M0 8.500h40M0 16.500h40M0 24.500h40M0 32.500h40" stroke="#121318"/><path d="M.5 0v40M0 .5h40" stroke="#25262f"/></pattern>
          <radialGradient id="hatchfill" gradientUnits="userSpaceOnUse" cx="405" cy="137" r="84"><stop offset="0" stop-color="#ff0"/><stop offset=".25" stop-color="#f0f00f"/><stop offset=".5" stop-color="#bebe41"/><stop offset=".75" stop-color="#6c6c93"/><stop offset="1" stop-color="#00f"/></radialGradient>
        </defs>
        <rect width="100%" height="100%" fill="#000"/>
        <rect width="100%" height="100%" fill="url(#major)"/>
        <path d="M34.500 0v400" stroke="#194a19"/>
        <rect x="321.500" y="75.500" width="167" height="123" fill="url(#hatchfill)" stroke="#d5d5f5"/>
        <g fill="none" stroke="#bbb"><path d="M11.500 337v37h37M8.500 370.500h6v6h-6zM12.500 325l4.500 5 4.500-5M17 330v5M51 363l10 10M61 363l-10 10"/><path d="M714.500 190.500h29v29h-29zM724 205.500h10M729.500 200v10" stroke="#eee"/></g>
      </svg>
      <span class="vlabel">[−] [俯视] [二维线框]</span>
      <div class="compass">
        <svg class="ring" viewBox="0 0 66 66"><circle cx="33" cy="33" r="28" fill="none" stroke="#343436" stroke-width="8"/></svg>
        <span class="n">北</span><span class="w">西</span><button class="top">上</button><span class="e">东</span><span class="so">南</span>
      </div>
      <button class="wcs">WCS<svg viewBox="0 0 8 8"><path d="M1 2h6L4 6z" fill="none" stroke="#aaa"/></svg></button>
      <div class="navbar"><svg viewBox="0 0 24 156" fill="none" stroke="#252525"><circle cx="19" cy="5" r="2.500"/><circle cx="12" cy="23" r="7.500"/><circle cx="12" cy="23" r="3.500"/><path d="M10 37h4l-2 2z"/><path d="M8 60l-4-7 3 1V47l2 5V45l2 6 1-7 1 7 3-5-1 7 4-3-4 9z"/><path d="M4 66l12 12M16 66L4 78M3 69v-4h4M13 65h4v4M3 75v4h4"/><circle cx="16" cy="77" r="3"/><path d="M18 79l3 3M10 88h4l-2 2z"/><ellipse cx="12" cy="104" rx="8" ry="3"/><path d="M12 94v19M9 97l3-4 3 4M3 101l-1 4 4 1M10 116h4l-2 2zM3.500 125.500h4v5h-4zM9.500 125.500h4v5h-4zM15.500 125.500h4v5h-4zM4 133h11v9H4z"/><path d="M7 134l6 3-6 3z" fill="#222"/><circle cx="19" cy="151" r="2.500"/></svg></div>
    </div>
    <div class="vscroll"><svg viewBox="0 0 8 8"><path d="M1 6l3-4 3 4" fill="none" stroke="#333" stroke-width="1.300"/></svg><i></i><svg viewBox="0 0 8 8"><path d="M1 2l3 4 3-4" fill="none" stroke="#333" stroke-width="1.300"/></svg></div>
    <div class="tabs">
      <button class="nv" aria-label="第一个"><svg viewBox="0 0 8 8"><path d="M1 1v6M7 1v6L2 4z" fill="#777" stroke="#777"/></svg></button><button class="nv" aria-label="上一个"><svg viewBox="0 0 8 8"><path d="M6 1v6L2 4z" fill="#777"/></svg></button><button class="nv" aria-label="下一个"><svg viewBox="0 0 8 8"><path d="M2 1v6l4-3z" fill="#777"/></svg></button><button class="nv" aria-label="最后一个"><svg viewBox="0 0 8 8"><path d="M7 1v6M1 1v6l5-3z" fill="#777" stroke="#777"/></svg></button>
      <button class="tab on">模型</button><button class="tab">布局1</button><svg class="sl" viewBox="0 0 6 11"><path d="M1 11L5 0" stroke="#333"/></svg><button class="tab">布局2</button><svg class="sl" viewBox="0 0 6 11"><path d="M1 11L5 0" stroke="#333"/></svg>
      <div class="hscroll"><svg viewBox="0 0 8 8"><path d="M6 1L2 4l4 3" fill="none" stroke="#333" stroke-width="1.300"/></svg><i></i><svg viewBox="0 0 8 8"><path d="M2 1l4 3-4 3" fill="none" stroke="#333" stroke-width="1.300"/></svg></div>
    </div>
  </section>
  <div class="side right">
    <i class="hgrip"></i>
    <button class="b" aria-label="删除"><svg><use href="#erase"/></svg></button><button class="b" aria-label="复制"><svg><use href="#copyobj"/></svg></button><button class="b" aria-label="镜像"><svg><use href="#mirror"/></svg></button><button class="b" aria-label="偏移"><svg><use href="#offset"/></svg></button><button class="b" aria-label="阵列"><svg><use href="#array"/></svg></button><button class="b" aria-label="移动"><svg><use href="#move"/></svg></button><button class="b" aria-label="旋转"><svg><use href="#rotate"/></svg></button><button class="b" aria-label="缩放"><svg><use href="#scale"/></svg></button><button class="b" aria-label="拉伸"><svg><use href="#stretch"/></svg></button><button class="b" aria-label="修剪"><svg><use href="#trim"/></svg></button><button class="b" aria-label="延伸"><svg><use href="#extend"/></svg></button><button class="b" aria-label="打断于点"><svg><use href="#breakpt"/></svg></button><button class="b" aria-label="打断"><svg><use href="#break"/></svg></button><button class="b" aria-label="合并"><svg><use href="#join"/></svg></button><button class="b" aria-label="倒角"><svg><use href="#chamfer"/></svg></button><button class="b" aria-label="圆角"><svg><use href="#fillet"/></svg></button><button class="b" aria-label="光顺曲线"><svg><use href="#blend"/></svg></button><button class="b" aria-label="分解"><svg><use href="#explode"/></svg></button>
    <i class="hgrip"></i>
    <button class="b" aria-label="前置"><svg><use href="#ord1"/></svg></button><button class="b" aria-label="后置"><svg><use href="#ord2"/></svg></button><button class="b" aria-label="置于对象之上"><svg><use href="#ord3"/></svg></button><button class="b" aria-label="置于对象之下"><svg><use href="#ord4"/></svg></button><span class="hs"></span><button class="b" aria-label="注释前置"><svg><use href="#abc"/></svg></button><button class="b" aria-label="图案填充后置"><svg><use href="#gradient"/></svg></button>
  </div>
</main>

<section class="cmd">
  <i class="cgrip"></i>
  <div class="log">
    <p>&lt;预览图案填充&gt;</p>
    <p>拾取或按 Esc 键返回到对话框或 &lt;单击右键接受图案填充&gt;:</p>
    <label class="prompt">命令:<input type="text"></label>
  </div>
</section>

<div class="status">
  <span class="xyz">4331.9367, 1157.3960, 0.0000</span>
  <button class="t" aria-label="推断约束"><svg viewBox="0 0 14 14"><path d="M1 6h10M6 1v10" stroke="#333"/><path d="M7 5h3v3" fill="none" stroke="#1d5fa8" stroke-width="1.500"/><circle cx="10" cy="9" r="2.500" fill="none" stroke="#2869ae"/><path d="M4 12h3" stroke="#c43"/></svg></button>
  <button class="t" aria-label="捕捉"><svg viewBox="0 0 14 14"><path d="M2 3h9M2 6h9M2 9h9" stroke="#333" stroke-dasharray="1 2"/><path d="M11.500 2v9H3" fill="none" stroke="#333"/></svg></button>
  <button class="t act" aria-label="栅格"><svg viewBox="0 0 14 14"><path d="M1.500 1.500h11v11h-11zM4.500 1v12M7.500 1v12M10.500 1v12M1 4.500h12M1 7.500h12M1 10.500h12" fill="#fff" stroke="#444"/></svg></button>
  <button class="t" aria-label="正交"><svg viewBox="0 0 14 14"><path d="M2.500 1v11H13M2 8h4v4" fill="none" stroke="#444"/></svg></button>
  <button class="t" aria-label="极轴"><svg viewBox="0 0 14 14"><circle cx="6" cy="8" r="4" fill="none" stroke="#333"/><path d="M6 8l6-6M6 8h6" stroke="#333" stroke-width="1.300"/></svg></button>
  <button class="t" aria-label="对象捕捉"><svg viewBox="0 0 14 14"><path d="M3 3h10v10H3z" fill="#f4f4f4" stroke="#555"/><path d="M1 1h3v3H1z" fill="#fff" stroke="#e26b2b"/></svg></button>
  <button class="t" aria-label="三维捕捉"><svg viewBox="0 0 14 14"><path d="M3 4l2-2h8v7l-2 2H3z" fill="#e9eef4" stroke="#445a76"/><path d="M3 4h8v7M11 4l2-2" fill="none" stroke="#445a76"/><path d="M1 10h3v3H1z" fill="#fff" stroke="#e26b2b"/></svg></button>
  <button class="t" aria-label="追踪"><svg viewBox="0 0 14 14"><path d="M11 3L3 11h10" fill="none" stroke="#333" stroke-width="1.300"/></svg></button>
  <button class="t" aria-label="动态UCS"><svg viewBox="0 0 14 14"><path d="M2.500 2v10H13M2 12l7-7" fill="none" stroke="#333"/><path d="M8 6l1-5 4 3z" fill="#f2a020"/></svg></button>
  <button class="t" aria-label="动态输入"><svg viewBox="0 0 14 14"><path d="M1 6h7M4.500 3v7M8 7h4v3H7z" fill="none" stroke="#222" stroke-width="1.300"/></svg></button>
  <button class="t" aria-label="线宽"><svg viewBox="0 0 14 14"><path d="M2 8h10" stroke="#111" stroke-width="2"/><path d="M7 3v9" stroke="#111"/></svg></button>
  <button class="t act" aria-label="透明度"><svg viewBox="0 0 14 14"><path d="M1.500 1.500h11v11h-11z" fill="#b2dcf4" stroke="#3a8ec4"/><path d="M3 3l8 8M3 7l4 4M7 3l4 4M11 3l-8 8M11 7l-4 4M7 3L3 7" stroke="#5ba8d6"/></svg></button>
  <button class="t" aria-label="快捷特性"><svg viewBox="0 0 14 14"><path d="M4 3h6v8H4zM6 5h2v4H6z" fill="none" stroke="#222"/></svg></button>
  <button class="t" aria-label="选择循环"><svg viewBox="0 0 14 14"><path d="M1 4h6M4 1v6" stroke="#333"/><path d="M5 5h5v5H5z" fill="#ddd" stroke="#555"/><path d="M8 8h5v5H8z" fill="#67b94b" stroke="#34731f"/></svg></button>
  <span class="fill"></span>
  <button class="t mod">模型</button>
  <button class="t" aria-label="布局"><svg viewBox="0 0 14 14"><path d="M2 2h10v10H2z" fill="#eee" stroke="#444"/><path d="M5 5h4v4H5z" fill="#888"/></svg></button>
  <button class="t" aria-label="快速查看"><svg viewBox="0 0 14 14"><path d="M2 2h4v10H2zM8 2h4v10H8z" fill="#eee" stroke="#444"/></svg></button>
  <span class="gap"></span>
  <button class="t sc"><svg viewBox="0 0 14 14"><path d="M2 12L7 2l5 10M7 2v10" fill="none" stroke="#222"/></svg>1:1▾</button>
  <button class="t" aria-label="注释可见性"><svg viewBox="0 0 14 14"><path d="M2 12L6 2l4 10" fill="none" stroke="#222"/><circle cx="10" cy="8" r="3" fill="#f4a72c"/></svg></button>
  <button class="t" aria-label="自动缩放"><svg viewBox="0 0 14 14"><path d="M2 12L6 2l4 10M6 2v10" fill="none" stroke="#555"/></svg></button>
  <span class="s"></span>
  <button class="t" aria-label="切换工作空间"><svg><use href="#gear"/></svg></button>
  <button class="t" aria-label="锁定"><svg><use href="#lock"/></svg></button>
  <button class="t" aria-label="硬件加速"><svg viewBox="0 0 14 14"><path d="M1.500 2h9v8h-9z" fill="#dce5ef" stroke="#456"/><circle cx="10" cy="9" r="3" fill="#f4a72c"/></svg></button>
  <button class="t lamp" aria-label="隔离对象"><svg><use href="#bulb"/></svg></button>
  <button class="drop" aria-label="状态栏菜单"><svg><use href="#tri"/></svg></button>
  <button class="t" aria-label="全屏显示"><svg viewBox="0 0 14 14"><path d="M1.500 2h11v10h-11z" fill="#eee" stroke="#333"/><path d="M1 3h12" stroke="#333" stroke-width="2"/></svg></button>
</div>

<footer class="task">
  <button class="start" aria-label="开始"><svg viewBox="0 0 12 12"><path d="M0 2l5-1v4.600H0zM6 .8L12 0v5.600H6zM0 6.400h5V11l-5-1zM6 6.400h6V12l-6-.8z" fill="#fff"/></svg></button>
  <label class="search"><svg viewBox="0 0 16 16"><circle cx="8" cy="8" r="6.500" fill="none" stroke="#111" stroke-width="2"/></svg><input type="text" placeholder="在这里输入你要搜索的内容" aria-label="搜索"><svg viewBox="0 0 16 16"><rect x="5.500" y="1.500" width="5" height="9" rx="2.500" fill="none" stroke="#333"/><path d="M3.500 8c0 6 9 6 9 0M8 12.500V15M6 15h4" fill="none" stroke="#333"/></svg></label>
  <button class="app" aria-label="画图"><svg viewBox="0 0 18 18"><path d="M1 11C1 6 6 3 11 4c5 1 4 5 1 5-2 1-1 3-2 5-3 4-9 2-9-3z" fill="#a9d4ee" stroke="#e8f4fb"/><circle cx="5" cy="9" r="1.500" fill="#d33"/><circle cx="9" cy="7" r="1.400" fill="#e9b51c"/><circle cx="5" cy="13" r="1.400" fill="#3a9b3a"/><path d="M8 13l7-10" stroke="#c98b3c" stroke-width="2"/><path d="M14 4l2-3" stroke="#f2d9a8" stroke-width="2.500"/></svg></button>
  <button class="app" aria-label="视频"><svg viewBox="0 0 18 18"><path d="M1 7h16v10H1z" fill="#fff"/><path d="M1 5l15-3" stroke="#fff" stroke-width="3" stroke-dasharray="2.500 1.500"/></svg></button>
  <button class="app cur" aria-label="AutoCAD"><svg viewBox="0 0 18 18"><path d="M1 2h15v14H1z" fill="#8c9093"/><path d="M9 9h8v8H9z" fill="#e9e9e9"/><path d="M1 12h8v5H1z" fill="#333"/><path d="M2 14L7 1l4 1 4 11-4-1-3-1-2 3z" fill="#e3161b"/><path d="M7 9l1-4 2 4z" fill="#6d0c0e"/></svg></button>
  <button class="app" aria-label="Edge"><svg viewBox="0 0 18 18"><path d="M2 8C3 3 6 1.500 9.500 1.500c5 0 7 4 6.500 8H6.500c.5 4 5 4.500 8.500 2.500v3.300C9 18.500 3 16 3 10.500 3 8 4.500 6 7 5.500 4.500 5.500 3 6.500 2 8zM6.700 7h5.600c0-3.500-5-3.500-5.600 0z" fill="#0b80dc"/></svg></button>
  <div class="tray">
    <svg viewBox="0 0 12 12"><path d="M1 8l5-4 5 4" fill="none" stroke="#eee"/></svg>
    <svg viewBox="0 0 12 12"><path d="M3 4.500h8v5H3z" fill="#ccc" stroke="#fff"/><path d="M0 3h4M1 1v2M3 1v2M2 4v4" stroke="#fff"/></svg>
    <svg viewBox="0 0 12 12"><path d="M0 4h2l3-3v10L2 8H0zM6.500 4c1 1 1 3 0 4M8.500 2.500c2 2 2 5 0 7M10.500 1c2 3 2 7 0 10" fill="none" stroke="#eee"/></svg>
    <svg viewBox="0 0 12 12"><path d="M1 11C1 5 5 1 11 1M4 11c0-4 3-7 7-7M7 11c0-2 2-4 4-4" fill="none" stroke="#bbb"/><circle cx="10" cy="10" r="1.500" fill="#fff"/></svg>
    <svg viewBox="0 0 12 12"><path d="M1 1l10-1 1 10-10 2z" fill="#21b22e"/><path d="M9 3.500C7 2 3.500 3 4 5c.5 1.500 4.500.5 4.500 2.500C8.500 9.500 5 9.500 3 8.500" fill="none" stroke="#fff" stroke-width="1.800"/></svg>
    <time>12:46<br>2018/12/27</time>
    <i class="peek"></i>
  </div>
</footer>

<svg class="arrow" aria-hidden="true"><path d="M855 26L529 177M554 132l-24 45M517 176l85-9" fill="none" stroke="#ee1c24" stroke-width="4" stroke-linecap="round"/></svg>
<div class="mark">
  <div class="brand"><span>Bai</span><span class="paw"><svg viewBox="0 0 52 56"><g fill="#fff"><ellipse cx="7" cy="21" rx="6.500" ry="9"/><ellipse cx="19" cy="9" rx="6.500" ry="8.500"/><ellipse cx="36" cy="9" rx="6.500" ry="8.500"/><ellipse cx="46" cy="25" rx="6.500" ry="9"/><path d="M26 22c8 0 11 7 16 12 7 6 7 20-5 21-5 0-7-1-11-1s-7 1-12 1C2 54 3 40 10 34c5-5 8-12 16-12z"/></g></svg><em>du</em></span><span class="cn">经验</span></div>
  <div class="url">jingyan.baidu.com</div>
</div>
</body>
</html>
```
FILE: styles.css
```css
* { box-sizing: border-box; }
html, body { margin: 0; }
body {
  height: 100vh;
  display: flex;
  flex-direction: column;
  background: #676767;
  color: #222;
  font: 10px/12px "Open Sans", "Noto Sans CJK SC", sans-serif;
  overflow: hidden;
  position: relative;
}
button, select, input { font: inherit; color: inherit; border: 0; padding: 0; margin: 0; background: none; border-radius: 0; outline: 0; min-width: 0; }
button { display: inline-flex; align-items: center; justify-content: center; flex: none; }
select { appearance: none; flex: 1; height: 100%; }
svg { display: block; flex: none; }
p { margin: 0; }
.defs { position: absolute; width: 0; height: 0; }

/* title and menu */
.head { display: grid; grid-template-columns: 30px 1fr; grid-template-rows: 18px 15px; background: linear-gradient(#9a9a9a, #777); }
.logo { grid-row: 1 / 3; margin-bottom: 4px; border: 1px solid #555; background: linear-gradient(#b5b5b5, #707070); }
.logo svg { width: 28px; height: 28px; }
.title { display: flex; background: #fff; min-width: 0; }
.quick, .info { display: flex; align-items: center; background: linear-gradient(#858585, #aeaeae); }
.quick { padding-left: 5px; }
.info { margin-left: auto; }
.q { width: 17px; height: 17px; }
.q svg, .b svg, .t svg { width: 14px; height: 14px; }
.drop { width: 9px; color: #444; }
.drop svg { width: 6px; height: 6px; }
.drop.off { color: #999; }
.drop.end { width: 15px; color: #111; border-left: 1px solid #777; }
.drop.end svg { width: 8px; height: 8px; }
.combo { display: flex; align-items: center; height: 16px; background: #e1e1e1; border: 1px solid #b8b8b8; flex: none; padding-left: 5px; }
.combo .ch { width: 8px; height: 8px; margin-right: 1px; }
.combo .ic { width: 13px; height: 13px; margin: 0 1px; }
.wide { width: 131px; padding-left: 0; background: linear-gradient(#ccc, #e0e0e0); }
.find { width: 132px; height: 16px; background: #f4f4f4; border: 1px solid #777; padding-left: 2px; font-size: 8px; font-style: italic; }
.find::placeholder { color: #666; opacity: 1; }
.login { width: 64px; justify-content: flex-start; color: #eee; }
.vs { width: 1px; height: 14px; background: #888; margin: 0 4px; }
.win { display: flex; width: 120px; justify-content: space-around; padding: 0 2px; }
.win button { width: 33px; }
.win svg, .docwin svg { width: 10px; height: 10px; }
.menu { display: flex; align-items: center; gap: 18px; padding-left: 10px; font-size: 9px; background: linear-gradient(#9d9d9d, #6f6f6f); }
.menu a { color: #f2f2f2; text-decoration: none; white-space: nowrap; }
.docwin { margin-left: auto; display: flex; gap: 2px; padding-right: 1px; }

/* horizontal toolbars */
.row { display: flex; flex: none; height: 20px; padding: 1px 0 2px; border-bottom: 1px solid #505050; }
.bar { display: flex; align-items: center; background: #eaeaea; flex: none; margin-right: 1px; height: 17px; }
.grip { width: 6px; height: 17px; background: repeating-linear-gradient(90deg, #555 0 1px, #777 1px 3px); flex: none; }
.b { width: 17px; height: 16px; }
.s { width: 4px; height: 15px; border-left: 1px solid #fff; background: linear-gradient(90deg, #aaa 1px, transparent 1px); flex: none; }
.st { width: 87px; }
.last { width: 91px; }
.mid { padding-left: 9px; }
.ws { width: 128px; }
.layer { width: 220px; padding-left: 2px; }
.sm { width: 12px; height: 12px; }
.sw { width: 8px; height: 8px; border: 1px solid #333; background: #fff; margin: 0 3px 0 1px; }
.serif { font-family: "Liberation Serif", serif; }
.c1 { width: 110px; padding-left: 3px; }
.c2 { width: 117px; padding-left: 2px; }
.c3 { width: 93px; padding-left: 2px; }
.c4 { width: 87px; background: #cdcdcd; }
.c4 .ch { opacity: .3; }
.c4 select { opacity: 1; color: #777; font-size: 8px; }
.ln { width: 44px; height: 1px; background: #222; margin-right: 4px; }
.short { width: 25px; }

/* work area */
.work { flex: 1; min-height: 0; display: flex; align-items: flex-start; }
.side { width: 18px; flex: none; display: flex; flex-direction: column; align-items: center; background: #ececec; margin-right: 3px; max-height: 100%; overflow: hidden; }
.right { width: 19px; margin: 0 1px 0 4px; }
.hgrip { width: 100%; height: 7px; flex: none; background: repeating-linear-gradient(#555 0 1px, #777 1px 3px); }
.side .b { flex: none; }
.big { font-size: 14px; font-weight: 600; }
.hs { width: 14px; height: 4px; border-top: 1px solid #aaa; margin-top: 3px; flex: none; }
.doc { flex: 1; min-width: 0; align-self: stretch; display: grid; grid-template-columns: 1fr 12px; grid-template-rows: 1fr 12px; border: 1px solid #a6a6a6; border-top-width: 2px; background: #f0f0f0; }
.view { position: relative; overflow: hidden; background: #000; border-bottom: 1px solid #401010; }
.drawing { position: absolute; width: 100%; height: 100%; }
.vlabel { position: absolute; left: 4px; top: 3px; color: #ddd; font-size: 9px; }
.compass { position: absolute; right: 6px; top: 5px; width: 78px; height: 78px; display: grid; grid-template: 18px 1fr 18px / 18px 1fr 18px; place-items: center; color: #bbb; font-size: 11px; }
.ring { position: absolute; left: 6px; top: 6px; width: 66px; height: 66px; }
.compass span, .compass button { position: relative; }
.n, .so { grid-column: 2; }
.w { grid-column: 1; grid-row: 2; }
.e { grid-column: 3; grid-row: 2; }
.n { grid-row: 1; }
.so { grid-row: 3; }
.compass .top { grid-column: 2; grid-row: 2; width: 28px; height: 28px; background: #a9a9a9; border: 2px solid #b5b5b5; color: #4a4d55; font-size: 18px; line-height: 20px; }
.wcs { position: absolute; right: 28px; top: 91px; width: 35px; height: 12px; border-radius: 3px; background: #777783; border: 1px solid #9a9aa6; color: #333; font: 8px/10px "Liberation Sans", sans-serif; justify-content: space-between; padding: 0 3px; }
.wcs svg { width: 7px; height: 7px; }
.navbar { position: absolute; right: 2px; top: 122px; width: 24px; height: 156px; background: #4c4c4c; border-radius: 3px; opacity: .9; }
.navbar svg { width: 24px; height: 156px; }
.vscroll { display: flex; flex-direction: column; align-items: center; padding: 2px 0; }
.vscroll svg, .hscroll svg { width: 8px; height: 8px; }
.vscroll i { width: 10px; height: 12px; background: #cdcdcd; margin: auto 0 98px; }
.tabs { grid-column: 1 / 3; display: flex; align-items: center; background: #f0f0f0; font-size: 9px; line-height: 11px; }
.nv { width: 10px; height: 11px; border-right: 1px solid #bbb; }
.nv svg { width: 7px; height: 7px; }
.tab { height: 11px; padding: 0 2px; }
.on { background: #000; color: #fff; font-weight: 700; padding: 0 8px; clip-path: polygon(0 0, 100% 0, 88% 100%, 12% 100%); margin: 0 1px 0 2px; }
.sl { width: 6px; height: 11px; }
.hscroll { margin-left: auto; width: 35%; display: flex; align-items: center; border-left: 3px solid #ccc; padding: 0 14px 0 3px; }
.hscroll i { width: 12px; height: 10px; background: #cdcdcd; margin: 0 122px 0 auto; }

/* command window */
.cmd { display: flex; flex: none; margin-top: 3px; background: #9d9d9d; }
.cgrip { width: 12px; height: 5px; background: repeating-linear-gradient(#777 0 1px, #999 1px 2px); }
.log { flex: 1; background: #c8c8c8; border-top: 1px solid #ddd; padding-top: 1px; font: 10px/11px "Liberation Mono", "Noto Sans CJK SC", monospace; }
.log p { white-space: nowrap; height: 11px; }
.prompt { display: flex; height: 13px; margin-top: 6px; background: #fff; border-top: 1px solid #aaa; line-height: 13px; }
.prompt input { flex: 1; }

/* status bar */
.status { display: flex; flex: none; align-items: center; height: 17px; background: linear-gradient(#9d9d9d, #757575); border-top: 1px solid #666; }
.xyz { width: 159px; padding-left: 8px; color: #aaa; font: 7px/12px "Liberation Mono", monospace; }
.t { width: 16px; height: 16px; background: linear-gradient(#c4c4c4, #a2a2a2); border-right: 1px solid #787878; }
.t svg { width: 12px; height: 12px; }
.act { background: #bfe4f5; }
.fill { flex: 1; }
.gap { width: 14px; }
.mod { width: 21px; font-size: 9px; }
.sc { width: 40px; font-size: 8px; }
.lamp { width: 21px; background: #999; }
.status .s { height: 16px; }

/* taskbar */
.task { display: flex; flex: none; height: 29px; background: #04171d; color: #fff; }
.start { width: 35px; }
.start svg { width: 12px; height: 12px; }
.search { width: 252px; display: flex; align-items: center; gap: 7px; padding: 0 8px 0 7px; background: #f2f2f2; color: #333; }
.search svg { width: 16px; height: 16px; }
.search input { flex: 1; }
.search input::placeholder { color: #333; opacity: 1; }
.app { width: 34px; margin: 0 1px; background: linear-gradient(#8fdbe8, #8fdbe8) 50% 100% / 29px 2px no-repeat; }
.app svg { width: 18px; height: 18px; }
.search + .app { margin-left: 2px; }
.cur { background: linear-gradient(#8fdbe8, #8fdbe8) 50% 100% / 100% 2px no-repeat #3b484c; }
.tray { margin-left: auto; display: flex; align-items: center; gap: 7px; }
.tray svg { width: 12px; height: 12px; }
.tray time { width: 52px; margin-left: 6px; text-align: center; font-size: 9px; line-height: 14px; }
.tray .peek { width: 4px; height: 29px; border-left: 1px solid #59666a; margin-left: -6px; }

/* overlays */
.arrow { position: absolute; left: 0; top: 0; width: 100%; height: 100%; pointer-events: none; }
.mark { position: absolute; right: 53px; bottom: 21px; width: 180px; color: #fff; opacity: .85; pointer-events: none; filter: drop-shadow(0 0 1px #888); }
.brand { display: flex; align-items: flex-end; font: 700 41px/38px "Liberation Sans", sans-serif; }
.paw { position: relative; width: 52px; height: 56px; }
.paw svg { width: 52px; height: 56px; }
.paw em { position: absolute; left: 9px; bottom: 0; color: #aaa; font: italic 700 26px/30px "Liberation Sans", sans-serif; }
.cn { font: 700 30px/36px "Noto Sans CJK SC", sans-serif; margin-left: 1px; }
.url { font: 600 20px/24px "Open Sans", sans-serif; margin-top: 4px; }
```
